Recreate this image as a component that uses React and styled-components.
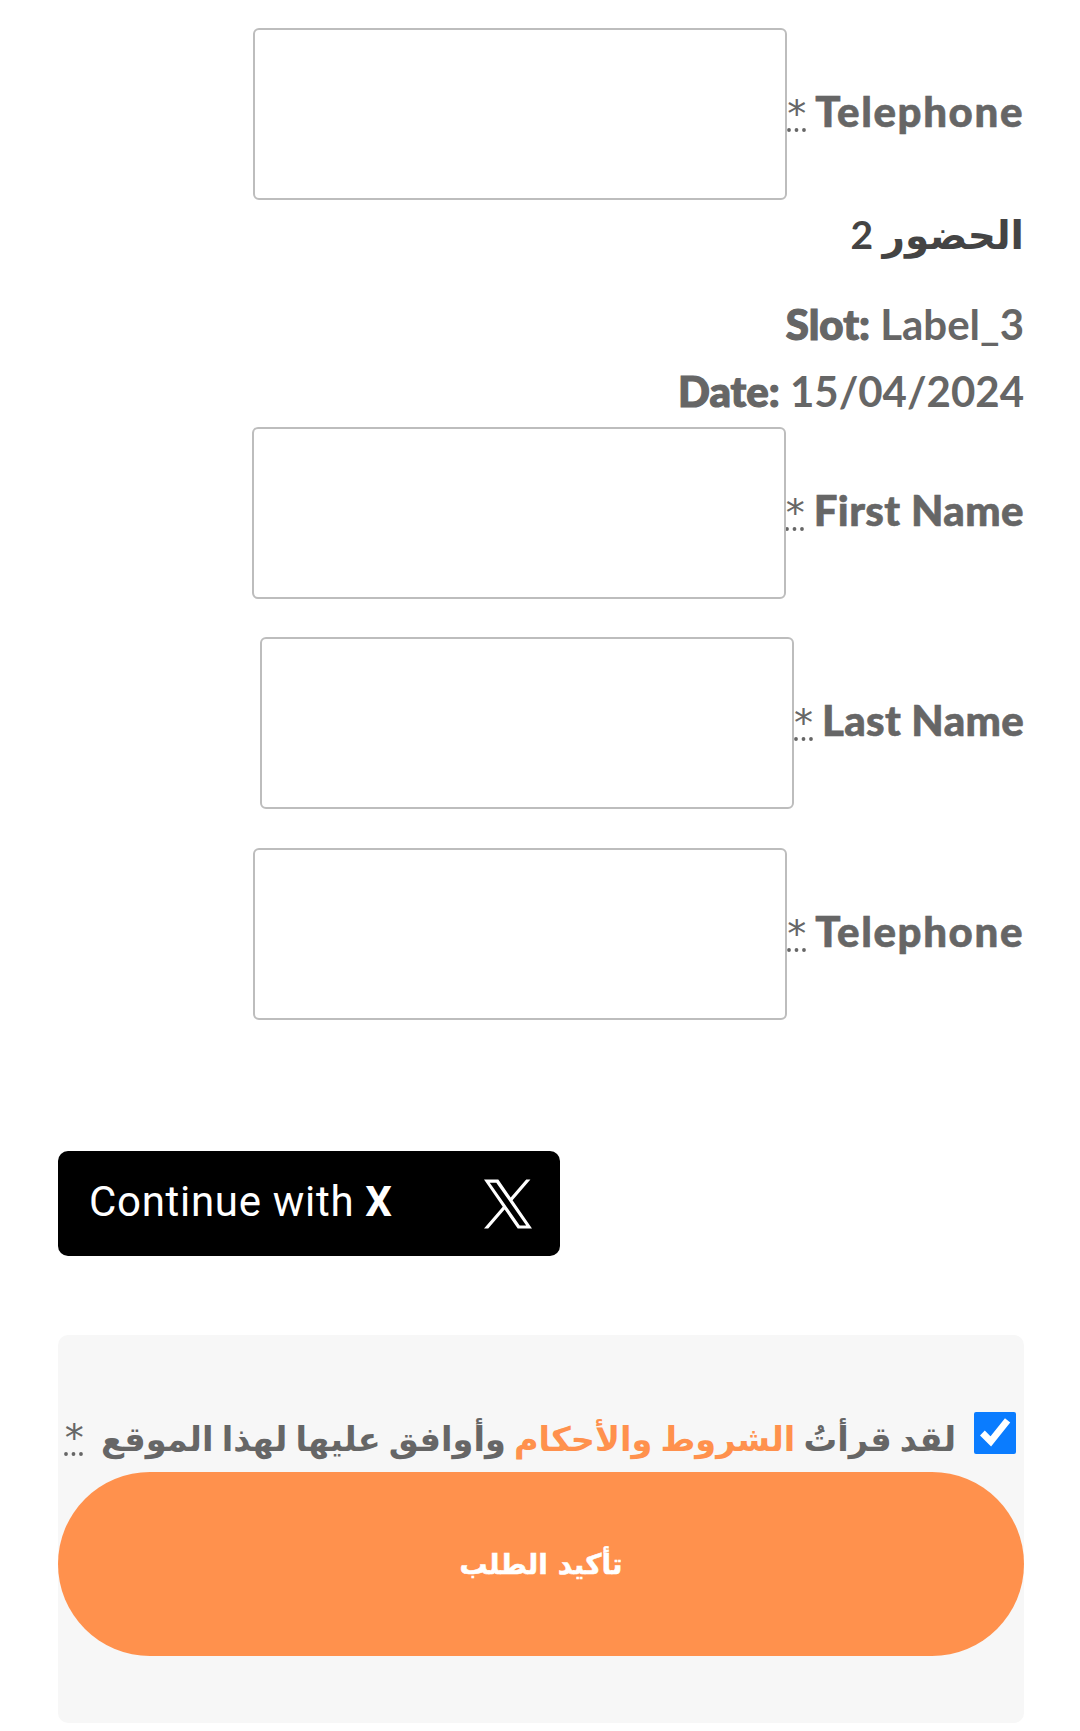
import React from "react";
import styled, { createGlobalStyle } from "styled-components";

const Global = createGlobalStyle`
  html, body { margin: 0; padding: 0; background: #fff; }
  body { font-family: "Lato", "DejaVu Sans", sans-serif; }
`;

const Page = styled.div`
  direction: rtl;
  width: 1080px;
  height: 1731px;
  box-sizing: border-box;
  padding: 28px 56px 0 58px;
  overflow: hidden;
`;

const Field = styled.div`
  display: flex;
  align-items: center;
  justify-content: flex-start;
  gap: 0;
  margin-bottom: ${(p) => p.$after ?? 39}px;
`;

const Label = styled.label`
  direction: ltr;
  font-size: 42px;
  font-weight: 900;
  letter-spacing: ${(p) => p.$tracking}px;
  -webkit-text-stroke: 0.6px #666;
  color: #666;
  white-space: nowrap;
  padding-bottom: 6px;
`;

const Req = styled.abbr`
  font-family: "DejaVu Sans", sans-serif;
  font-weight: 400;
  font-size: 38px;
  letter-spacing: 0;
  -webkit-text-stroke: 0;
  color: #666;
  text-decoration: underline dotted;
  margin-right: 9px;
`;

const TextBox = styled.input`
  width: 534px;
  height: 172px;
  box-sizing: border-box;
  border: 2px solid #bdbdbd;
  border-radius: 6px;
  background: #fff;
`;

const Title = styled.h3`
  margin: 0 0 27px;
  font-size: 39px;
  line-height: 60px;
  font-weight: 700;
  color: #444;
`;

const MetaBlock = styled.div`
  margin-bottom: 2px;
`;

const Meta = styled.p`
  direction: ltr;
  text-align: right;
  margin: 0;
  height: 67px;
  line-height: 67px;
  font-size: 42px;
  font-weight: 700;
  color: #666;
  b {
    font-weight: 900;
    -webkit-text-stroke: 1.2px #666;
  }
`;

const XButton = styled.button`
  direction: ltr;
  display: flex;
  align-items: center;
  justify-content: space-between;
  width: 502px;
  height: 105px;
  margin: 131px auto 79px 0;
  padding: 0 28px 0 31px;
  box-sizing: border-box;
  background: #000;
  color: #fff;
  border: none;
  border-radius: 10px;
  font-family: "Roboto", sans-serif;
  font-size: 42px;
  letter-spacing: 0.7px;
  b { font-weight: 700; }
`;

const ButtonLabel = styled.span`
  margin-bottom: 4px;
`;

const Panel = styled.div`
  background: #f7f7f7;
  border-radius: 10px;
  height: 388px;
  padding-top: 75px;
  box-sizing: border-box;
`;

const Terms = styled.div`
  display: flex;
  align-items: flex-start;
  padding-right: 8px;
  height: 62px;
  font-size: 33.6px;
  font-weight: 700;
  color: #666;
  white-space: nowrap;
`;

const TermsText = styled.span`
  padding-top: 6px;
`;

const Check = styled.input`
  width: 42px;
  height: 42px;
  margin: 2px 0 0 18px;
  accent-color: #0a7cff;
  flex: none;
`;

const TermsLink = styled.a`
  color: #ff914d;
`;

const Submit = styled.button`
  display: block;
  width: 100%;
  height: 184px;
  border: none;
  border-radius: 92px;
  background: #ff914d;
  color: #fff;
  font-family: "DejaVu Sans", sans-serif;
  font-size: 28px;
  font-weight: 700;
  -webkit-text-stroke: 0.5px #fff;
`;

function Row({ name, after, tracking }) {
  return (
    <Field $after={after}>
      <Label $tracking={tracking}>
        <Req title="required">*</Req>
        {name}
      </Label>
      <TextBox type="text" />
    </Field>
  );
}

export default function App() {
  return (
    <Page>
      <Global />
      <Row name="Telephone" after={4} tracking={1.6} />
      <Title>الحضور 2</Title>
      <MetaBlock>
        <Meta><b>Slot:</b> Label_3</Meta>
        <Meta><b>Date:</b> 15/04/2024</Meta>
      </MetaBlock>
      <Row name="First Name" after={38} tracking={0.4} />
      <Row name="Last Name" tracking={0.3} />
      <Row name="Telephone" after={0} tracking={1.6} />
      <XButton type="button">
        <ButtonLabel>Continue with <b>X</b></ButtonLabel>
        <svg width="48" height="50" viewBox="0 0 1200 1227" aria-hidden="true">
          <path fill="#fff" d="M714.163 519.284 1160.89 0h-105.86L667.137 450.887 357.328 0H0l468.492 681.821L0 1226.37h105.866l409.625-476.152 327.181 476.152H1200L714.137 519.284h.026ZM569.165 687.828l-47.468-67.894-377.686-540.24h162.604l304.797 435.991 47.468 67.894 396.2 566.721H892.476L569.165 687.854v-.026Z" />
        </svg>
      </XButton>
      <Panel>
        <Terms>
          <Check type="checkbox" defaultChecked />
          <TermsText>لقد قرأتُ <TermsLink>الشروط والأحكام</TermsLink> وأوافق عليها لهذا الموقع <Req title="required">*</Req></TermsText>
        </Terms>
        <Submit type="button">تأكيد الطلب</Submit>
      </Panel>
    </Page>
  );
}
